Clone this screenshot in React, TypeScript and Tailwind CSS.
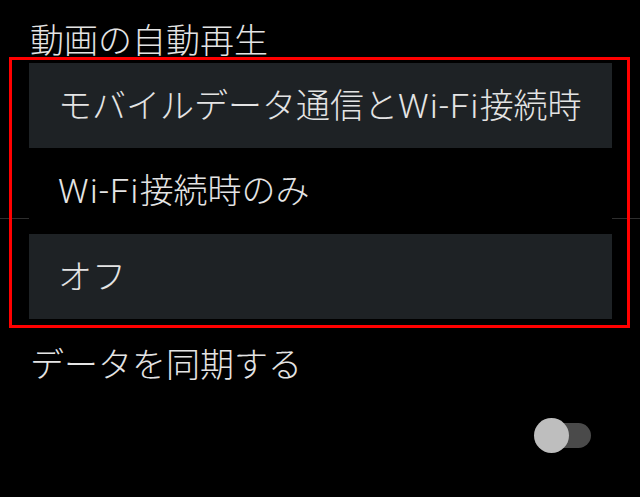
import React from 'react';

const options = [
  { label: ['モバイルデータ通信と', 'Wi-Fi', '接続時'], selected: true },
  { label: ['', 'Wi-Fi', '接続時のみ'], selected: false },
  { label: ['オフ', '', ''], selected: true },
];

export default function App() {
  return (
    <div className="relative w-[640px] h-[497px] overflow-hidden bg-black text-[#e4e4e4] font-light font-[family-name:Roboto,'Noto_Sans_CJK_JP',sans-serif]">
      {/* list divider behind the popup */}
      <div className="absolute left-0 right-0 top-[218px] h-px bg-[#2e2e2e]" />

      {/* section header */}
      <div className="h-[57px] pt-[24px] pl-[30px] text-[34px] leading-[34px] whitespace-nowrap">
        動画の自動再生
      </div>

      {/* popup with red annotation frame */}
      <div className="relative z-10 ml-[9px] w-[621px] border-[3px] border-[#ff0000] pt-[3px] pb-[6px] pl-[17px] pr-[15px]">
        <div className="flex flex-col bg-black">
          {options.map((o, i) => (
            <div
              key={i}
              className={`flex items-center pl-[29px] text-[34px] leading-[34px] whitespace-nowrap ${
                i === 1 ? 'h-[86px]' : 'h-[85px]'
              } ${o.selected ? 'bg-[#1e2225]' : 'bg-black'}`}
            >
              {o.label[0]}
              {o.label[1] && <span className="tracking-[1.4px]">{o.label[1]}</span>}
              {o.label[2]}
            </div>
          ))}
        </div>
      </div>

      {/* sync row */}
      <div className="pt-[20px] pl-[30px] text-[34px] leading-[34px] whitespace-nowrap">
        データを同期する
      </div>

      <div className="flex justify-end pr-[49px] mt-[41px]">
        <div className="relative w-[52px] h-[25px] rounded-full bg-[#4a4a4a]">
          <div className="absolute left-[-5px] top-[-5px] w-[35px] h-[35px] rounded-full bg-[#bebebe]" />
        </div>
      </div>
    </div>
  );
}
